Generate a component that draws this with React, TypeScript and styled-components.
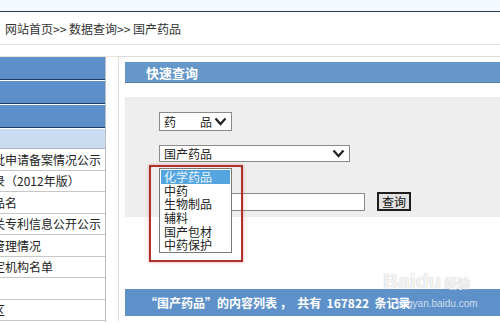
import React from 'react';
import styled, { createGlobalStyle } from 'styled-components';

const GlobalStyle = createGlobalStyle`
  html, body {
    margin: 0;
    padding: 0;
    background: #ffffff;
  }
  body {
    font-family: "Noto Sans CJK SC", "Liberation Sans", sans-serif;
  }
  * {
    box-sizing: border-box;
  }
`;

const Page = styled.div`
  position: relative;
  width: 500px;
  height: 323px;
  overflow: hidden;
  background: #ffffff;
`;

const TopStrip = styled.div`
  height: 12px;
  background: #f3f9fc;
  border-bottom: 1px solid #22384c;
`;

const Breadcrumb = styled.div`
  height: 33px;
  display: flex;
  align-items: center;
  padding-left: 5px;
  font-size: 12px;
  color: #333333;
  border-bottom: 1px solid #e2e2e2;
`;

const Divider = styled.div`
  height: 12px;
  border-bottom: 1px solid #ece4d2;
`;

const Body = styled.div`
  display: flex;
  align-items: flex-start;
  height: 265px;
`;

const Sidebar = styled.div`
  width: 106px;
  flex-shrink: 0;
  overflow: hidden;
  border-right: 1px solid #bdbdbd;
  height: 100%;
`;

const MenuHeader = styled.div`
  height: 23px;
  background: #5d8fca;
  border-bottom: 1px solid #1f3f63;
  margin-bottom: 1px;
`;

const MenuSub = styled.div`
  height: 20px;
  background: #c9dcf1;
  border-bottom: 1px solid #a9b3bf;
`;

const MenuRow = styled.div`
  height: 21.5px;
  display: flex;
  align-items: center;
  border-bottom: 1px solid #c6c6c6;
  font-size: 12px;
  color: #222222;
  white-space: nowrap;
`;

const RowText = styled.span<{ $shift: number }>`
  margin-left: ${({ $shift }) => $shift}px;
`;

const MainPanel = styled.div`
  flex: 1;
  height: 100%;
  margin-left: 12px;
  margin-top: -1px;
  border-left: 1px solid #dcdcdc;
  border-top: 1px solid #dcdcdc;
  padding: 5px 0 0 6px;
`;

const TitleBar = styled.div`
  height: 21px;
  display: flex;
  align-items: center;
  padding-left: 21px;
  background: #6597c9;
  border-bottom: 1px solid #5580ad;
  color: #ffffff;
  font-size: 13px;
  font-weight: bold;
`;

const SearchPanel = styled.div`
  position: relative;
  margin-top: 14px;
  height: 120px;
  background: #eeeeee;
  padding: 15px 0 0 34px;
  display: flex;
  flex-direction: column;
`;

const SelectBox = styled.div<{ $width: number; $height: number }>`
  width: ${({ $width }) => $width}px;
  height: ${({ $height }) => $height}px;
  display: flex;
  align-items: center;
  justify-content: space-between;
  padding: 0 4px 0 4px;
  background: #ffffff;
  border: 1px solid #8a8a8a;
  font-size: 12px;
  color: #222222;
  white-space: pre;
`;

const Chevron = () => (
  <svg width="13" height="9" viewBox="0 0 13 9">
    <polyline points="1.5,1.5 6.5,7 11.5,1.5" fill="none" stroke="#222" strokeWidth="2.2" />
  </svg>
);

const InputRow = styled.div`
  display: flex;
  align-items: center;
  margin-top: 30px;
`;

const TextInput = styled.div`
  width: 206px;
  height: 18px;
  background: #ffffff;
  border: 1px solid #8a8a8a;
`;

const QueryButton = styled.div`
  margin-left: 12px;
  width: 34px;
  height: 19px;
  display: flex;
  align-items: center;
  justify-content: center;
  background: #e2e2e2;
  border: 2px solid #1e1e1e;
  font-size: 12px;
  color: #111111;
`;

const OptionList = styled.div`
  position: absolute;
  left: 34px;
  top: 71px;
  width: 73px;
  height: 85px;
  padding-top: 1px;
  background: #ffffff;
  border: 1px solid #7a7a7a;
`;

const Option = styled.div<{ $active?: boolean }>`
  margin: 0 1px;
  height: 13.7px;
  line-height: 13.7px;
  padding-left: 3px;
  font-size: 12px;
  color: ${({ $active }) => ($active ? '#e9f5ff' : '#222222')};
  background: ${({ $active }) => ($active ? '#55a6e0' : 'transparent')};
`;

const Highlight = styled.div`
  position: absolute;
  left: 24px;
  top: 68px;
  width: 94px;
  height: 97px;
  border: 2px solid #b0302c;
  box-shadow: 0 0 3px rgba(200, 60, 60, 0.45);
  pointer-events: none;
`;

const ResultBar = styled.div`
  margin-top: 72px;
  height: 27px;
  display: flex;
  align-items: center;
  padding-left: 20px;
  background: #5e91c9;
  color: #ffffff;
  font-size: 12px;
  font-weight: bold;
  white-space: pre;
`;

const Watermark = styled.div`
  position: absolute;
  left: 383px;
  top: 270px;
  width: 100px;
  pointer-events: none;
`;

const WatermarkLogo = styled.div`
  display: flex;
  align-items: baseline;
  font-family: "Liberation Sans", sans-serif;
  font-size: 21px;
  font-weight: bold;
  color: rgba(255, 255, 255, 0.85);
  text-shadow: 0 0 1px rgba(120, 120, 120, 0.6);
  line-height: 22px;
`;

const WatermarkCn = styled.span`
  margin-left: 3px;
  font-family: "Noto Sans CJK SC", sans-serif;
  font-size: 13px;
`;

const WatermarkUrl = styled.div`
  margin-left: 14px;
  margin-top: 4px;
  font-family: "Liberation Sans", sans-serif;
  font-size: 10px;
  color: rgba(255, 255, 255, 0.7);
`;

const menuRows = [
  { text: '批申请备案情况公示', shift: -7 },
  { text: '录（2012年版）', shift: -7 },
  { text: '品名', shift: -7 },
  { text: '关专利信息公开公示', shift: -7 },
  { text: '管理情况', shift: -7 },
  { text: '定机构名单', shift: -7 },
  { text: '', shift: 0 },
  { text: '区', shift: -7 },
];

const options = ['化学药品', '中药', '生物制品', '辅料', '国产包材', '中药保护'];

export default function App() {
  return (
    <Page>
      <GlobalStyle />
      <TopStrip />
      <Breadcrumb>网站首页&gt;&gt; 数据查询&gt;&gt; 国产药品</Breadcrumb>
      <Divider />
      <Body>
        <Sidebar>
          <MenuHeader />
          <MenuHeader />
          <MenuHeader />
          <MenuSub />
          {menuRows.map((row, idx) => (
            <MenuRow key={idx}>
              <RowText $shift={row.shift}>{row.text}</RowText>
            </MenuRow>
          ))}
        </Sidebar>
        <MainPanel>
          <TitleBar>快速查询</TitleBar>
          <SearchPanel>
            <SelectBox $width={73} $height={19}>
              <span>药　　品</span>
              <Chevron />
            </SelectBox>
            <SelectBox $width={191} $height={17} style={{ marginTop: 14 }}>
              <span>国产药品</span>
              <Chevron />
            </SelectBox>
            <InputRow>
              <TextInput />
              <QueryButton>查询</QueryButton>
            </InputRow>
            <OptionList>
              {options.map((opt, idx) => (
                <Option key={opt} $active={idx === 0}>{opt}</Option>
              ))}
            </OptionList>
            <Highlight />
          </SearchPanel>
          <ResultBar>“国产药品”的内容列表 ，  共有  167822  条记录</ResultBar>
        </MainPanel>
      </Body>
      <Watermark>
        <WatermarkLogo>
          Baidu<WatermarkCn>经验</WatermarkCn>
        </WatermarkLogo>
        <WatermarkUrl>jingyan.baidu.com</WatermarkUrl>
      </Watermark>
    </Page>
  );
}
